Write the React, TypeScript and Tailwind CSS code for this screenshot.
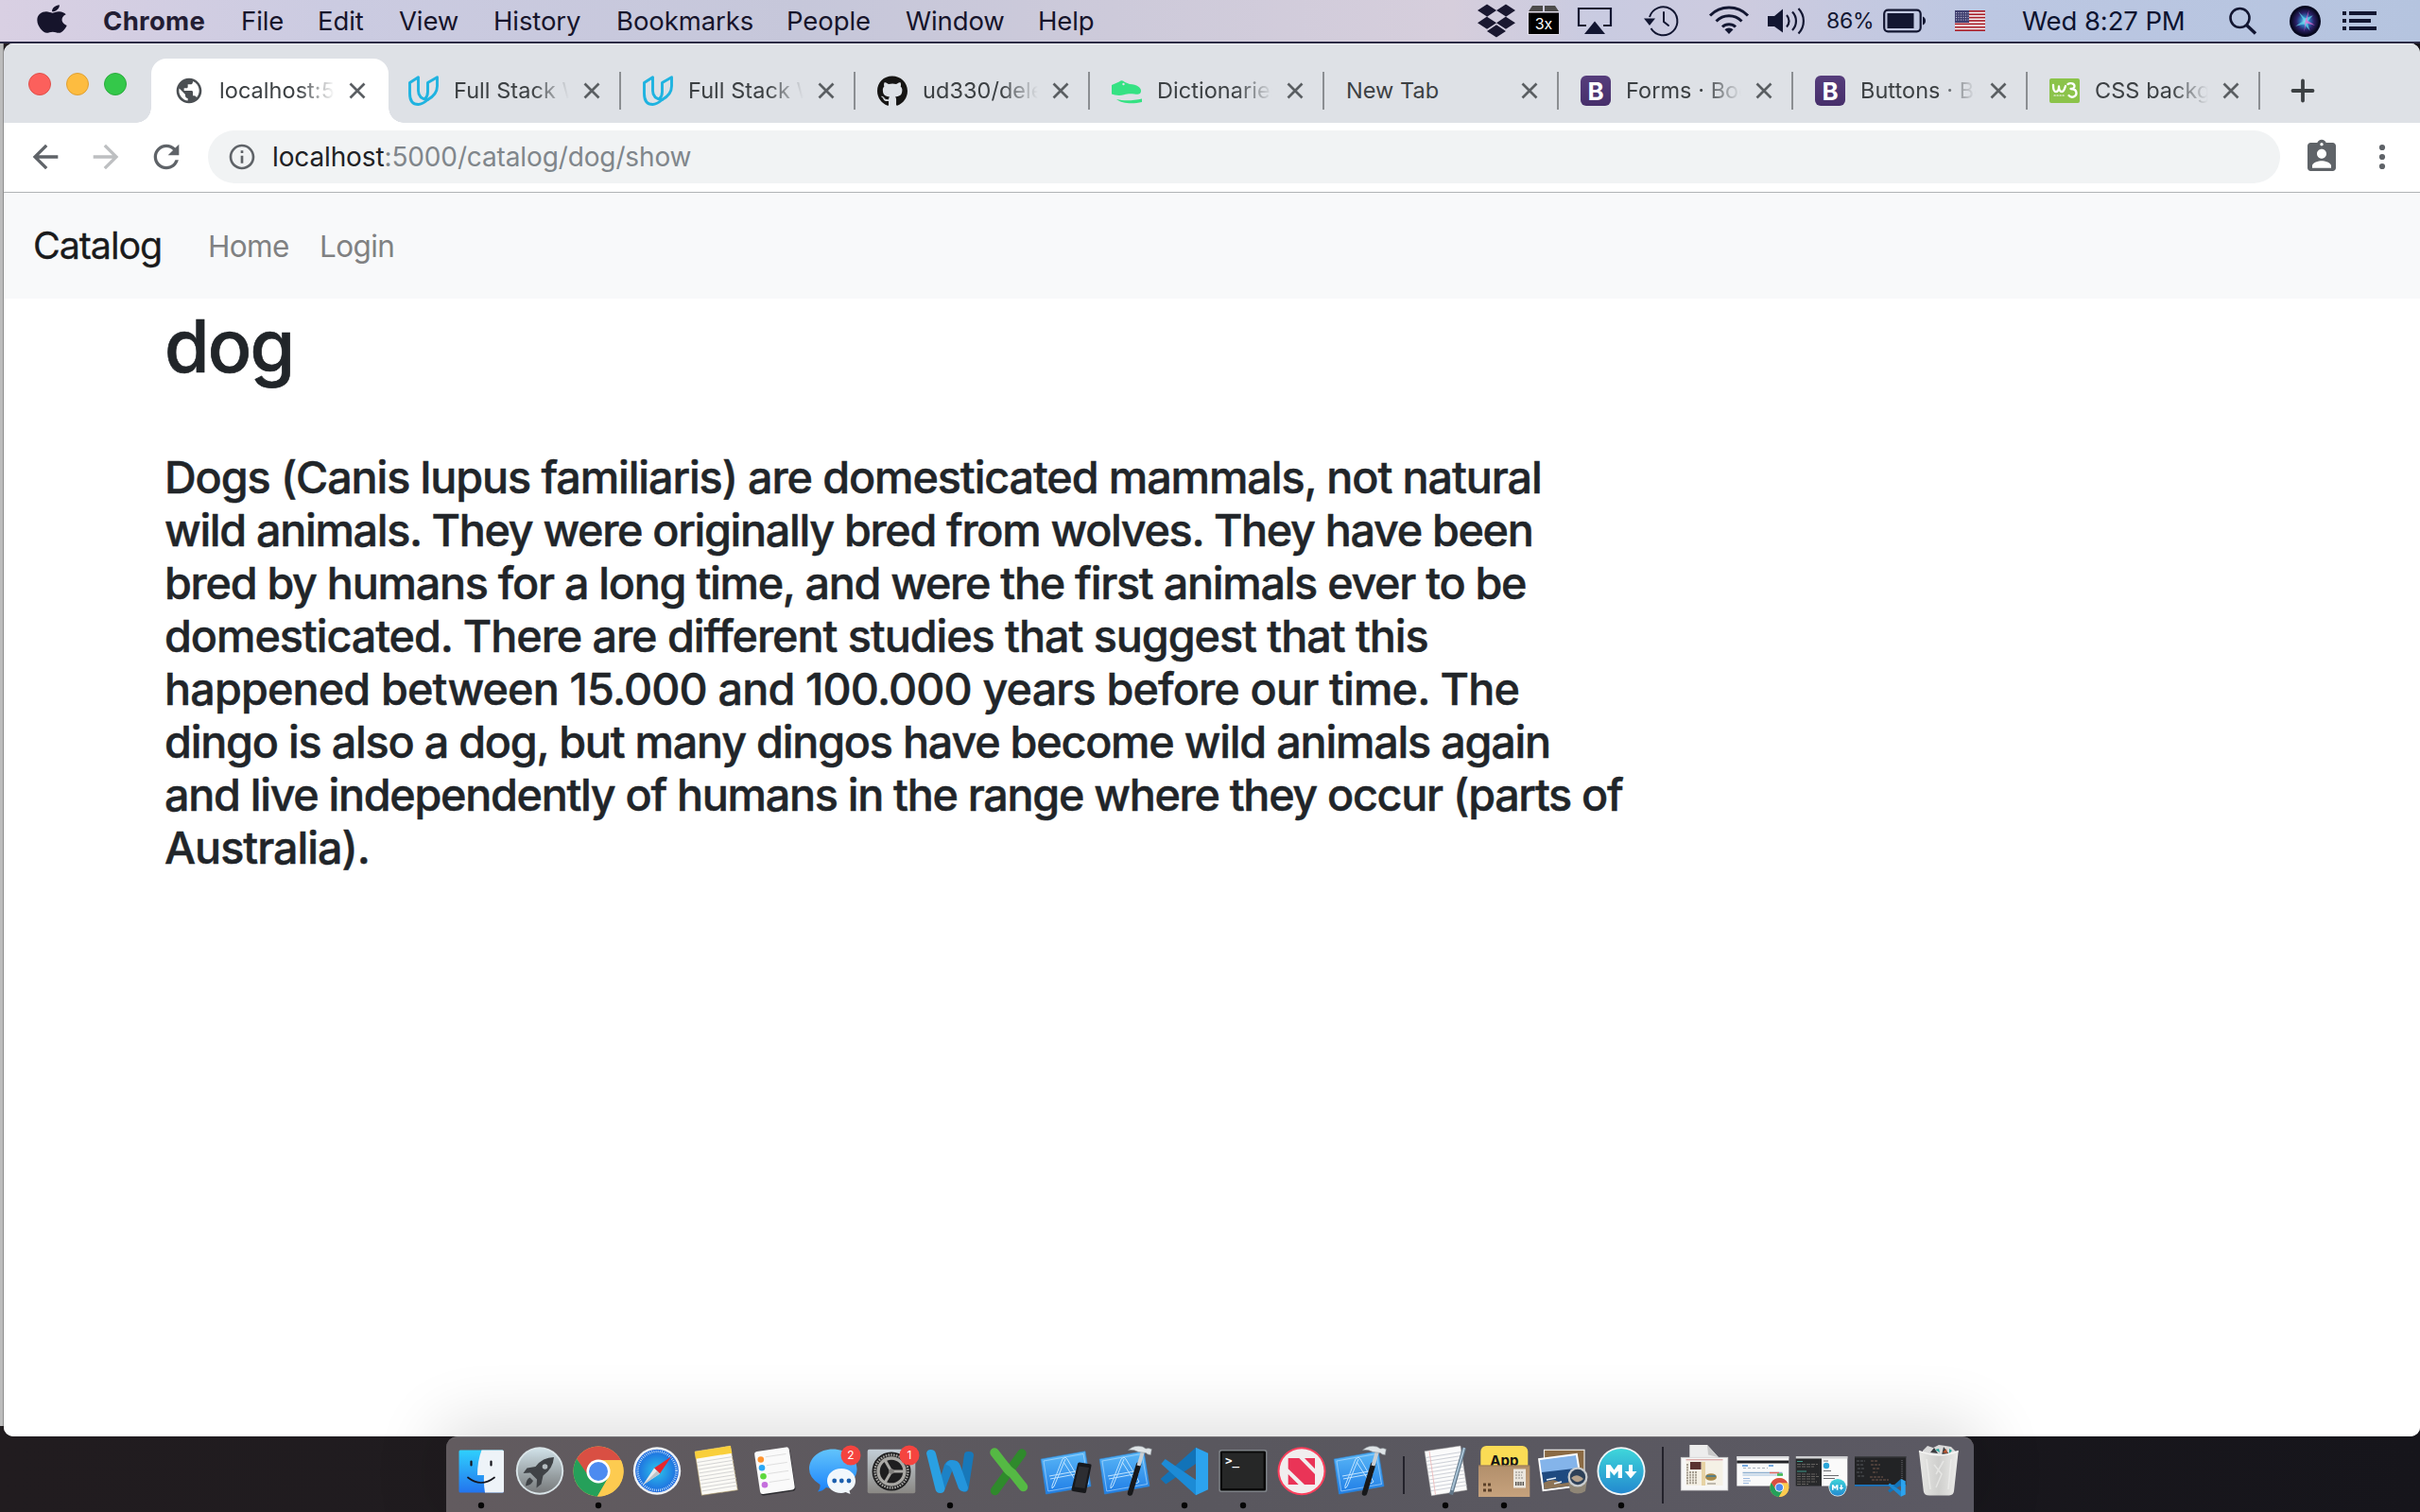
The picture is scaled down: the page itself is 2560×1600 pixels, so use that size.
import React from "react";
import { FaApple, FaDropbox, FaGithub } from "react-icons/fa";
import { MdPublic, MdArrowBack, MdArrowForward, MdRefresh, MdInfoOutline, MdAssignmentInd } from "react-icons/md";

/* ---------- Menu bar ---------- */

const menus = [
  { label: "File", cls: "w-[81px]" },
  { label: "Edit", cls: "w-[86px]" },
  { label: "View", cls: "w-[100px]" },
  { label: "History", cls: "w-[130px]" },
  { label: "Bookmarks", cls: "w-[180px]" },
  { label: "People", cls: "w-[126px]" },
  { label: "Window", cls: "w-[140px]" },
  { label: "Help", cls: "w-[100px]" },
];

function MenuBar() {
  return (
    <header className="flex h-11 items-center bg-[linear-gradient(90deg,#d9d0e3_0%,#cbcbe1_14%,#c6c7da_33%,#cdcada_46%,#d6cedc_60%,#c9cbe1_66%,#cdcbdf_72%,#bcc7e2_82%,#b5c4df_100%)] text-[27.5px] tracking-[-0.1px] text-[#16142b]">
      <FaApple className="ml-[39px] h-[34px] w-[32px] shrink-0 -translate-y-[2px]" preserveAspectRatio="none" />
      <div className="mt-[2px] ml-[38px] w-[146px] font-bold tracking-[0.3px] text-[#231d33]">Chrome</div>
      {menus.map((m) => (
        <div key={m.label} className={`${m.cls} mt-[2px] shrink-0`}>{m.label}</div>
      ))}
      <div className="ml-auto flex h-full shrink-0 items-center text-[#121631]">
        <FaDropbox className="h-[40px] w-[40px] text-[#1a1830]" preserveAspectRatio="none" />
        <svg className="ml-[13px] h-[44px] w-[34px]" viewBox="0 0 34 44">
          <path d="M5 6h11v6H1zM18 6h11l4 6H18z" fill="#4c4b4b" />
          <rect x="0" y="12" width="33" height="25" fill="#e8e4ee" opacity=".8" />
          <rect x="1" y="13.500" width="32" height="22.500" fill="#000" />
          <text x="17" y="30.500" fill="#fff" fontSize="16" textAnchor="middle" fontFamily="Inter, sans-serif">3x</text>
        </svg>
        <svg className="ml-[18px] h-[44px] w-[38px]" viewBox="0 0 38 44">
          <path d="M10 27H2V9h34v18h-8" fill="none" stroke="currentColor" strokeWidth="2.200" />
          <path d="M19 22.500 30 36H8z" fill="currentColor" />
        </svg>
        <svg className="ml-[32px] h-[44px] w-[40px]" viewBox="0 0 40 44" fill="none" stroke="currentColor" strokeWidth="2">
          <path d="M7 18A15 15 0 1 1 8.500 30" />
          <path d="M22 13v10l5 4" strokeLinecap="round" />
          <path d="M1 19.500h12L7 27z" fill="currentColor" stroke="none" />
        </svg>
        <svg className="ml-[29px] h-[44px] w-[44px]" viewBox="0 0 44 44" fill="none" stroke="currentColor" strokeWidth="3">
          <path d="M2 16.500a28 28 0 0 1 40 0M8.500 22.500a19 19 0 0 1 27 0M15 28.500a10 10 0 0 1 14 0" />
          <path d="M22 36l-4.500-4.700a6.500 6.500 0 0 1 9 0z" fill="currentColor" stroke="none" />
        </svg>
        <svg className="ml-[18px] h-[44px] w-[44px]" viewBox="0 0 44 44" fill="none" stroke="currentColor" strokeWidth="2.200">
          <path d="M1 17h7l9-7.500v25L8 28H1z" fill="currentColor" stroke="none" />
          <path d="M21 16a9 9 0 0 1 0 12.500M27 12.500a14 14 0 0 1 0 19.500M33.500 9a19 19 0 0 1 0 26.500" />
        </svg>
        <span className="mt-px ml-[19px] w-[60px] text-[23px] tracking-[-0.2px]">86%</span>
        <svg className="h-[44px] w-[46px]" viewBox="0 0 46 44">
          <rect x="1.200" y="10.700" width="38.500" height="22.600" rx="4" fill="none" stroke="currentColor" strokeWidth="2.200" />
          <rect x="4.500" y="14" width="28" height="16" fill="currentColor" />
          <path d="M42 17.500c4 1.500 4 7.500 0 9z" fill="currentColor" />
        </svg>
        <svg className="ml-[30px] h-[22px] w-[32px]" viewBox="0 0 32 22">
          <rect width="32" height="22" fill="#f4f2f4" />
          {[0, 1, 2, 3, 4, 5, 6].map((i) => (
            <rect key={i} y={i * 3.380} width="32" height="1.700" fill="#a9202b" />
          ))}
          <rect width="15" height="13" fill="#3f3f70" />
          <path d="M1 2.500h14M1 5h14M1 7.500h14M1 10h14" stroke="#c9c9dc" strokeWidth="1" strokeDasharray="1 1.500" />
        </svg>
        <span className="mt-[2px] ml-[39px] w-[173px] text-[#0c1330]">Wed 8:27 PM</span>
        <svg className="ml-[46px] h-[44px] w-[30px]" viewBox="0 0 30 44" fill="none" stroke="currentColor" strokeWidth="2.600">
          <circle cx="11.500" cy="19" r="10" />
          <path d="M18.500 26.500 28 35.500" strokeWidth="3.400" />
        </svg>
        <svg className="ml-[34px] h-[33px] w-[33px]" viewBox="0 0 32 32">
          <defs>
            <radialGradient id="siri">
              <stop offset="0" stopColor="#bff3fb" />
              <stop offset=".3" stopColor="#2f7fc4" />
              <stop offset=".65" stopColor="#2b2168" />
              <stop offset="1" stopColor="#0a0a24" />
            </radialGradient>
          </defs>
          <circle cx="16" cy="16" r="16" fill="#07081f" />
          <circle cx="16" cy="16" r="14" fill="url(#siri)" />
          <path d="M15 16 9 6l7 7 8-3-6 7 3 9-6-7-9 2 6-4z" fill="#63dcec" opacity=".7" />
          <path d="M16 16 20 4l-2 11 8 5-9-2-2 9z" fill="#ef6bd4" opacity=".75" />
        </svg>
        <svg className="mr-[45px] ml-[22px] h-[44px] w-[38px]" viewBox="0 0 38 44" fill="currentColor">
          <path d="M1 12h4v4H1zM8 12h29v4H8zM1 20h4v4H1zM8 20h23v4H8zM1 28h4v4H1zM8 28h29v4H8z" />
        </svg>
      </div>
    </header>
  );
}

/* ---------- Tabs ---------- */

function Udacity() {
  return (
    <svg className="h-8 w-8" viewBox="0 0 32 32" fill="none" stroke="#1fb3e0" strokeWidth="2.900" strokeLinejoin="round">
      <path d="M1.500 7.500 10.500 1.800V16Q10.500 24.500 20.500 25.500 14.500 30.500 10.500 30.500 1.500 30.500 1.500 19z" />
      <path d="M20.500 25.500Q30.500 20 30.500 11V1.800L20.500 7.500V17Q20.500 22 17.500 24.500" />
    </svg>
  );
}

function Dino() {
  return (
    <svg className="h-8 w-8" viewBox="0 0 32 32" fill="#35e283">
      <path d="M0 10 8 6.500Q11 4 14 7l5 2c8 0 12 4 12 7 0 4-3 4-7 3.500-4-.5-7-.5-11 .8C9 21.500 3 21 0 19.500z" />
      <circle cx="12.500" cy="9" r="1.200" fill="#dee1e6" />
      <path d="M5 25c8 2 18 1.500 27-.5v3.500c-9 2-21 2-27-3z" />
    </svg>
  );
}

function Bootstrap() {
  return (
    <div className="flex h-8 w-8 items-center justify-center rounded-md bg-linear-to-b from-[#563d7c] to-[#472f6b] text-[26px] font-bold text-white">B</div>
  );
}

function W3() {
  return (
    <div className="flex h-[26px] w-8 flex-col items-center justify-center rounded-[2px] bg-[#8bc34a] text-white">
      <svg className="h-[26px] w-8" viewBox="0 0 32 26" fill="none" stroke="#fff" strokeWidth="2.300" strokeLinecap="round" strokeLinejoin="round">
        <path d="M4 7c0 6 1 7 3 7s3-2 3-5.500c0 3.500 1 5.500 3.200 5.500S16 11 17 8M19.500 6c3-2 7-.5 7 2s-2.500 3-4 3c3 0 6 1 6 4.500s-5 6-8 2.500" />
        <path d="M5 18h11" strokeWidth="1.200" strokeDasharray="1.200 1.800" />
      </svg>
    </div>
  );
}

type TabInfo = { title: string; icon?: React.ReactNode; active?: boolean };

const tabs: TabInfo[] = [
  { title: "localhost:5000", icon: <MdPublic className="h-[34px] w-[34px] text-[#4b4f53]" />, active: true },
  { title: "Full Stack Web", icon: <Udacity /> },
  { title: "Full Stack Web", icon: <Udacity /> },
  { title: "ud330/delete", icon: <FaGithub className="h-[33px] w-[33px] text-[#161514]" /> },
  { title: "Dictionaries", icon: <Dino /> },
  { title: "New Tab" },
  { title: "Forms · Bootstrap", icon: <Bootstrap /> },
  { title: "Buttons · Bootstrap", icon: <Bootstrap /> },
  { title: "CSS background", icon: <W3 /> },
];

function Tab({ tab, last }: { tab: TabInfo; last: boolean }) {
  return (
    <div className={`relative flex h-[68px] shrink-0 items-center ${last ? "w-[246px]" : "w-[248px]"}`}>
      {tab.active && (
        <>
          <span className="absolute inset-y-0 -right-[2px] -left-px rounded-t-[16px] bg-white" />
          <span className="absolute bottom-0 -left-[17px] h-4 w-4 bg-[radial-gradient(circle_at_0_0,transparent_15.500px,#fff_16px)]" />
          <span className="absolute -right-[18px] bottom-0 h-4 w-4 bg-[radial-gradient(circle_at_100%_0,transparent_15.500px,#fff_16px)]" />
        </>
      )}
      {tab.icon && <span className="relative ml-[23px] flex w-[32px] shrink-0 justify-center">{tab.icon}</span>}
      <span className={`relative overflow-hidden text-[23.5px] tracking-[0.05px] whitespace-nowrap text-[#3c4043] ${tab.icon ? `ml-[16px] [mask-image:linear-gradient(to_right,#000_68%,transparent_100%)] ${last ? "w-[120px]" : "w-[122px]"}` : "ml-[23px] w-[170px]"}`}>{tab.title}</span>
      <svg className="relative ml-[15px] h-[18px] w-[18px] shrink-0" viewBox="0 0 18 18" stroke="#5a5e62" strokeWidth="2.700">
        <path d="M1.500 1.500l15 15M16.500 1.500l-15 15" />
      </svg>
      {!tab.active && <span className="ml-auto h-10 w-[2px] shrink-0 bg-[#8b8e92]" />}
    </div>
  );
}

function TabStrip() {
  return (
    <div className="flex h-[84px] items-end border-t border-[#f2f3f5] bg-[#dee1e6]">
      <div className="flex h-[68px] w-[157px] items-center gap-[16px] pb-[14px] pl-[26px]">
        <span className="h-6 w-6 rounded-full border border-[#e0504b] bg-[#fc605c]" />
        <span className="h-6 w-6 rounded-full border border-[#dfa033] bg-[#fdbc40]" />
        <span className="h-6 w-6 rounded-full border border-[#2bac3e] bg-[#34c84a]" />
      </div>
      {tabs.map((t, i) => (
        <Tab key={i} tab={t} last={i === tabs.length - 1} />
      ))}
      <svg className="mb-[21px] ml-[32px] h-[26px] w-[26px]" viewBox="0 0 26 26" stroke="#3c4043" strokeWidth="3.800" strokeLinecap="round">
        <path d="M13 2.500v21M2.500 13h21" />
      </svg>
    </div>
  );
}

function Toolbar() {
  return (
    <div className="flex h-[74px] items-center border-b border-[#b0b3b5] bg-white pb-px text-[#5f6368]">
      <MdArrowBack className="ml-[24px] h-10 w-10" />
      <MdArrowForward className="ml-[24px] h-10 w-10 text-[#bdbfc1]" />
      <MdRefresh className="ml-[24px] h-10 w-10" />
      <div className="ml-[24px] flex h-14 w-[2192px] items-center rounded-full bg-[#f1f3f4]">
        <MdInfoOutline className="ml-[20px] h-8 w-8" />
        <span className="ml-[16px] text-[28px] tracking-[-0.130px] text-[#80868b]">
          <span className="text-[#202124]">localhost</span>:5000/catalog/dog/show
        </span>
      </div>
      <MdAssignmentInd className="ml-[24px] h-10 w-10" />
      <svg className="ml-[34px] h-10 w-[20px]" viewBox="0 0 20 40" fill="#5f6368">
        <circle cx="10" cy="10" r="3.100" />
        <circle cx="10" cy="20" r="3.100" />
        <circle cx="10" cy="30" r="3.100" />
      </svg>
    </div>
  );
}

/* ---------- Page ---------- */

const lines = [
  { text: "Dogs (Canis lupus familiaris) are domesticated mammals, not natural", cls: "tracking-[-1.100px]" },
  { text: "wild animals. They were originally bred from wolves. They have been", cls: "tracking-[-1.310px]" },
  { text: "bred by humans for a long time, and were the first animals ever to be", cls: "tracking-[-1.270px]" },
  { text: "domesticated. There are different studies that suggest that this", cls: "tracking-[-1.050px]" },
  { text: "happened between 15.000 and 100.000 years before our time. The", cls: "tracking-[-0.840px]" },
  { text: "dingo is also a dog, but many dingos have become wild animals again", cls: "tracking-[-1.220px]" },
  { text: "and live independently of humans in the range where they occur (parts of", cls: "tracking-[-1.300px]" },
  { text: "Australia).", cls: "tracking-[-1.000px]" },
];

function Page() {
  return (
    <div className="flex-1 bg-white">
      <nav className="flex h-28 items-center bg-[#f8f9fa] pt-[2px]">
        <span className="ml-[31px] w-[185px] text-[39.500px] tracking-[-1.100px] text-[#1a1b1c] [-webkit-text-stroke:0.3px_#1a1b1c]">Catalog</span>
        <span className="w-[118px] text-[31.500px] tracking-[-0.600px] text-[#808182]">Home</span>
        <span className="text-[31.500px] tracking-[-0.600px] text-[#808182]">Login</span>
      </nav>
      <main className="pt-1 pl-[170px] text-[#212529]">
        <h1 className="h-[92px] text-[77px] leading-[92px] font-medium tracking-[-1.800px] [-webkit-text-stroke:0.7px_#212529]">dog</h1>
        <h3 className="mt-[65px] text-[46.700px] leading-[56px] font-medium whitespace-nowrap [-webkit-text-stroke:0.5px_#212529]">
          {lines.map((l) => (
            <span key={l.text} className={`block ${l.cls}`}>{l.text}</span>
          ))}
        </h3>
      </main>
    </div>
  );
}

/* ---------- Dock ---------- */

function Cell({ children, running }: { children: React.ReactNode; running?: boolean }) {
  return (
    <svg className="h-20 w-[62px] shrink-0" viewBox="0 0 62 80">
      {children}
      {running && <circle cx="31" cy="73" r="3.200" fill="#050505" />}
    </svg>
  );
}

function ChromeLogo({ x, y, r }: { x: number; y: number; r: number }) {
  return (
    <g transform={`translate(${x} ${y}) scale(${r / 26})`}>
      <circle r="26" fill="#fdcb50" />
      <path d="M-22.500-13A26 26 0 0 1 22.500-13L23.500-11.500H0L-11 6z" fill="#d94f43" />
      <path d="M-22.500-13A26 26 0 0 0-1 26L10.500 6.500-9 6.500z" fill="#25a05a" />
      <path d="M23.500-11.500H0V0L10.500 6-1 26A26 26 0 0 0 23.500-11.500z" fill="#fdcb50" />
      <circle r="12.300" fill="#fff" />
      <circle r="9.800" fill="#4d8bf0" />
    </g>
  );
}

function CodeLogo() {
  return (
    <>
      <path d="M43 11.700V29L11.300 50.500 5.700 45z" fill="#1273b8" />
      <path d="M10.700 24 6.300 29 43 62.300V46z" fill="#1c8bd6" />
      <path d="M43 11.700 56 17.700V56.300L43 62.300z" fill="#2ca3ee" />
    </>
  );
}

function MdLogo() {
  return (
    <>
      <circle cx="31" cy="36.700" r="25.500" fill="#f1f6f7" />
      <circle cx="31" cy="36.700" r="23.700" fill="url(#mdg)" />
      <path d="M15 44V30h4.500l4 5.500 4-5.500H32v14h-4.300v-7.500L23.500 41.500l-4.200-5V44zM39 30h4v7h4.500L41 44.500 34.700 37H39z" fill="#fff" />
    </>
  );
}

function Blueprint() {
  return (
    <>
      <path d="M3.200 24 50 15.700 56 52.700 8.500 61z" fill="url(#bpg)" stroke="#2a86d8" strokeWidth=".6" />
      <g fill="none" stroke="#bfe3ff" strokeWidth="1">
        <path d="M6 26 48 18.500 53.500 50.500 10.800 58z" opacity=".6" />
        <path d="M26 24 15 52M29 24 17 53M26 24l3-2 2 2M15 52l0 3 2-2M27 27l15 23M31 24l14 24M42 50l3-2M12 42l33-6M13 45l32-6" />
      </g>
    </>
  );
}

function XcodeIcon() {
  return (
    <Cell>
      <Blueprint />
      <path d="M44.500 30 35.500 60" stroke="#17181a" strokeWidth="5.500" strokeLinecap="round" />
      <path d="M49.500 14 44.500 31" stroke="#c8ced3" strokeWidth="4" />
      <path d="M33.500 14.500Q40 8.500 49 11l3 2 3-.5 3.300 1-1 6-3-.5-2-1.500-8-1q-5-3-10.800-2z" fill="#dfe4e7" stroke="#8a9096" strokeWidth=".6" />
    </Cell>
  );
}

function Badge({ n }: { n: string }) {
  return (
    <>
      <circle cx="50" cy="20" r="10.500" fill="#f5443f" />
      <text x="50" y="24.300" fill="#fff" fontSize="12" textAnchor="middle" fontFamily="Inter, sans-serif">{n}</text>
    </>
  );
}

function Divider({ cls, bar }: { cls: string; bar: string }) {
  return (
    <div className={`flex h-20 shrink-0 items-center justify-center ${cls}`}>
      <span className={`w-[2px] bg-[#23222b] ${bar}`} />
    </div>
  );
}

function Dock() {
  return (
    <footer className="relative z-10 flex h-20 justify-center">
      <div className="flex w-[1616px] rounded-t-[12px] border-t border-[#737074] bg-linear-to-r from-[#625b5f] via-[#59575e] to-[#5b5963] px-[6px] shadow-[0_-4px_70px_8px_rgba(0,0,0,0.140)]">
        <div className="-mt-px flex">
          <svg className="absolute h-0 w-0">
            <defs>
              <linearGradient id="mdg" x2="0" y2="1"><stop stopColor="#3fd6da" /><stop offset="1" stopColor="#2389cf" /></linearGradient>
              <linearGradient id="bpg" x2="0" y2="1"><stop stopColor="#5bb8f7" /><stop offset="1" stopColor="#1f7de6" /></linearGradient>
              <linearGradient id="fng" x2="0" y2="1"><stop stopColor="#2fd0fd" /><stop offset="1" stopColor="#2374ee" /></linearGradient>
              <linearGradient id="lpg" x2="0" y2="1"><stop stopColor="#cfe0e7" /><stop offset=".6" stopColor="#98a0a3" /><stop offset="1" stopColor="#77797b" /></linearGradient>
              <radialGradient id="sfg"><stop stopColor="#2cc4ea" /><stop offset="1" stopColor="#1d68df" /></radialGradient>
              <linearGradient id="msg" x2="0" y2="1"><stop stopColor="#62c4fb" /><stop offset="1" stopColor="#1c83fb" /></linearGradient>
              <linearGradient id="prg" x2="0" y2="1"><stop stopColor="#c4cfd7" /><stop offset="1" stopColor="#8a8884" /></linearGradient>
              <linearGradient id="bxg" x2="0" y2="1"><stop stopColor="#b28f6b" /><stop offset="1" stopColor="#c6a27d" /></linearGradient>
              <linearGradient id="trg"><stop stopColor="#e8e8e6" /><stop offset=".5" stopColor="#cfcfcd" /><stop offset="1" stopColor="#ececea" /></linearGradient>
            </defs>
          </svg>
          <Cell running>
            <rect x="7.500" y="14.500" width="47.500" height="45" rx="1.500" fill="url(#fng)" />
            <path d="M31.500 14.500H53.500a1.500 1.500 0 0 1 1.500 1.500V58a1.500 1.500 0 0 1-1.500 1.500H35q-1.500-9-1-18.500H27q0-15 4.500-26.500z" fill="#eef3f8" />
            <path d="M20.500 26.500v4M41.500 26.500v4" stroke="#15151d" strokeWidth="2.200" strokeLinecap="round" />
            <path d="M17 43.500q14 11 28 0" fill="none" stroke="#15151d" strokeWidth="1.700" strokeLinecap="round" />
          </Cell>
          <Cell>
            <circle cx="31" cy="36.500" r="25.200" fill="#d9e4e8" />
            <circle cx="31" cy="36.500" r="23.300" fill="url(#lpg)" />
            <path d="M46 22q-12 0-19.500 10l-9 1.500-4 5.500 7.500-.5 7 7-.500 9 5-4 2-9Q45 34 46 22z" fill="#3f4246" />
            <path d="M20.500 43.500q-4 2-4.500 9 6-1 8-5.500z" fill="#3f4246" />
            <circle cx="36.500" cy="32" r="2.800" fill="#b4bcc0" />
          </Cell>
          <Cell running><ChromeLogo x={31} y={37} r={26.500} /></Cell>
          <Cell>
            <circle cx="31" cy="36.500" r="25.200" fill="#eef1f3" />
            <circle cx="31" cy="36.500" r="22.800" fill="url(#sfg)" />
            <circle cx="31" cy="36.500" r="20.500" fill="none" stroke="#cfe9fb" strokeWidth="2.600" strokeDasharray=".8 1.350" />
            <path d="M46 21.500 28 33.500 34 39.500z" fill="#e8262d" />
            <path d="M16 51.500 28 33.500 34 39.500z" fill="#e9eaec" />
            <path d="M16 51.500 31 36.500 34 39.500z" fill="#bfc3c8" />
          </Cell>
          <Cell>
            <path d="M9 16 46.700 10 54.300 56.700 16.300 62.300z" fill="#fbfaf6" stroke="#b3a06b" strokeWidth=".6" />
            <path d="M9 16 46.700 10 48.300 17.700 10 23.700z" fill="#f9cf3a" />
            {[0, 1, 2, 3, 4, 5, 6, 7, 8].map((i) => (
              <path key={i} d={`M${11.500 + i * 0.620} ${27.500 + i * 3.800}l37.500-6`} stroke="#cfcfcf" strokeWidth=".9" />
            ))}
          </Cell>
          <Cell>
            <g transform="rotate(-8.500 31.300 36.500)">
              <rect x="13.500" y="15" width="37" height="45.500" rx="3" fill="#2c2c30" />
              <rect x="13" y="13.500" width="37" height="45.500" rx="3" fill="#fafafa" />
              <path d="M24 20.500h22M24 29.500h22M24 38.500h22M24 47.500h22" stroke="#d9d9d9" strokeWidth=".8" />
            </g>
            <circle cx="16.800" cy="24.500" r="3.300" fill="#ff9430" />
            <circle cx="18" cy="33.300" r="3.300" fill="#2ba8f5" />
            <circle cx="19.500" cy="42.300" r="3.300" fill="#5dd83c" />
            <circle cx="21" cy="51.300" r="3.300" fill="#c56fdd" />
          </Cell>
          <Cell>
            <path d="M31 13.500c14 0 25.500 9 25.500 21S45 55 31 55q-4 0-7-1-4 4-9 4.500 3-3.500 2.500-7.500Q6 44 6 34.500c0-12 11-21 25-21z" fill="url(#msg)" />
            <path d="M40 34c9 0 15 6 15 13 0 5-3 8.500-6.500 10.500L49.500 61l-5-2Q42 60 40 60c-9 0-15-6-15-13s6-13 15-13z" fill="#f1f7fc" />
            <g fill="#1b5fae"><circle cx="32.700" cy="47" r="2.400" /><circle cx="40.300" cy="47" r="2.400" /><circle cx="48" cy="47" r="2.400" /></g>
            <Badge n="2" />
          </Cell>
          <Cell>
            <rect x="5.700" y="13.700" width="50.600" height="46.500" rx="2" fill="url(#prg)" />
            <circle cx="31" cy="37" r="20.500" fill="#1e1e1f" />
            <circle cx="31" cy="37" r="17.500" fill="none" stroke="#a3a29f" strokeWidth="2.500" strokeDasharray="1.600 1.200" />
            <circle cx="31" cy="37" r="14" fill="none" stroke="#a9a8a4" strokeWidth="3.400" />
            <path d="M31 37 23.500 24M31 37H46M31 37 23.500 50" stroke="#a9a8a4" strokeWidth="3" />
            <circle cx="31" cy="37" r="2.800" fill="#807f7c" />
            <Badge n="1" />
          </Cell>
          <Cell running>
            <path d="M46 19Q46.500 15.500 51 16 56 16 56 20L50.500 56Q49 60 45 58L41.500 50z" fill="#1878b9" />
            <path d="M17 57 25 30Q28 25 32.500 25L33 37 25.500 56Q23 61 17 57z" fill="#1c82c6" />
            <path d="M26.500 30Q28 25 33.500 25 40 25 42 31L50 54Q50 58.500 45.500 58.500 42 58.500 40 55L33 36Q31 30 26.500 30z" fill="#2495dc" />
            <path d="M6 18Q6.500 14 10.500 14 15 14 16 18L25.500 55Q25.500 60 20.500 60 16.500 60 15.500 56z" fill="#2aa0e2" />
          </Cell>
          <Cell>
            <g fill="none" strokeLinecap="round" strokeWidth="9.500">
              <path d="M45 18 16.500 57.500" stroke="#2f8a2c" />
              <path d="M16 17 27 31Q31 37 35 39L46.500 53.500" stroke="#55b944" />
            </g>
          </Cell>
          <Cell>
            <Blueprint />
            <path d="M44 27.500 55 29.200Q57 29.500 56.500 31L51 58.500Q50.600 60.300 49 60L37 58Q35 57.500 35.500 56L42 29Q42.500 27.300 44 27.500z" fill="#17181b" />
            <path d="M43.500 31.500 54 33 49.500 55 38.500 53.500z" fill="#2c2d31" />
          </Cell>
          <XcodeIcon />
          <Cell running><CodeLogo /></Cell>
          <Cell running>
            <rect x="5.300" y="14" width="51.200" height="45" rx="2.500" fill="#7e8287" />
            <rect x="6.800" y="15.500" width="48.200" height="42" rx="1.500" fill="#0a0a0a" />
            <rect x="9" y="17.500" width="43.500" height="37.500" fill="#262727" />
            <text x="12" y="29.500" fill="#fff" fontSize="12.500" fontWeight="700" fontFamily="DejaVu Sans Mono, monospace">&gt;_</text>
          </Cell>
          <Cell>
            <circle cx="31" cy="36.700" r="25.500" fill="#fb3f5c" />
            <circle cx="31" cy="36.700" r="23.500" fill="#f1eeee" />
            <path d="M16.700 23H28.300L45 40V51H34L16.700 34.300zM34 23H45V34.300zM16.700 40 27.700 51H16.700z" fill="#ea3457" />
          </Cell>
          <XcodeIcon />
        </div>
        <Divider cls="w-[30px]" bar="h-10" />
        <div className="-mt-px -ml-[2px] flex">
          <Cell running>
            <path d="M9 15.700 47 10 54 56.700 16.300 62.700z" fill="#fbfbfb" stroke="#a9a9a9" strokeWidth=".5" />
            {[0, 1, 2, 3, 4, 5, 6, 7, 8, 9].map((i) => (
              <path key={i} d={`M${10.500 + i * 0.600} ${22.500 + i * 3.900}l37.500-6`} stroke="#c7cbd2" strokeWidth=".9" />
            ))}
            <path d="M14 15.500 20.500 61.500" stroke="#efb5b5" strokeWidth=".8" />
            <path d="M51 12 37 61.500" stroke="#62788a" strokeWidth="4.200" />
            <path d="M51 12 38 57" stroke="#a9c3d6" strokeWidth="2" />
          </Cell>
          <Cell running>
            <rect x="6.300" y="10" width="50" height="30" rx="6" fill="#fbdc55" />
            <text x="31.300" y="31" fill="#151515" fontSize="15" fontWeight="700" textAnchor="middle" fontFamily="Inter, sans-serif">App</text>
            <rect x="4" y="30.700" width="54.300" height="33.300" fill="url(#bxg)" />
            <path d="M4 31h54" stroke="#9a7854" strokeWidth="1" />
            <rect x="41" y="34.500" width="13" height="20" fill="#ebe6de" />
            <path d="M43 38h9M43 41h7M43 44h8" stroke="#8e8a84" strokeWidth="1.200" strokeDasharray="2 1" />
            <path d="M43 50h9" stroke="#55524d" strokeWidth="4" strokeDasharray="1 .6" />
            <path d="M9 51h3M14 51h3M9 57h3M14 57h4" stroke="#5a4029" strokeWidth="3" />
          </Cell>
          <Cell>
            <rect x="11.500" y="14.300" width="42.500" height="30" fill="#8b6a43" stroke="#efece6" strokeWidth="1.200" />
            <path d="M5 23.300 46.700 17.700 52.300 52.700 9.700 58.300z" fill="#fff" />
            <path d="M7 25 45 20 47.500 35 9 40z" fill="#84b4ea" />
            <path d="M9 38 47.500 33.500 50 51 11.500 56z" fill="#1f4a80" />
            <path d="M11 49q12-6 18 1l20-3 .7 4-38.200 5z" fill="#8d7456" />
            <path d="M14 46l10-2M22 50l8-2" stroke="#e6eef5" strokeWidth="1.600" />
            <path d="M37 46 39 58q8 5 16 0l2-12z" fill="#8f8676" />
            <circle cx="47" cy="43" r="10.500" fill="#c9ccce" />
            <circle cx="47" cy="43" r="8.200" fill="#2d4058" />
            <path d="M40 44q6-6 13 1-6 7-13-1z" fill="#b3a08b" />
          </Cell>
          <Cell running><MdLogo /></Cell>
        </div>
        <Divider cls="w-[26px]" bar="h-[60px]" />
        <div className="-mt-px flex">
          <Cell>
            <path d="M15.300 9H34L45.500 21.500V26H15.300z" fill="#ededed" />
            <path d="M34 9 35 19.500 45.500 22z" fill="#c9c9c9" />
            <rect x="6.300" y="22.300" width="49.500" height="34.700" fill="#f7f7f7" stroke="#d2d2d2" strokeWidth=".8" />
            <rect x="11.500" y="26" width="39" height="26" fill="#f5f1e6" />
            <path d="M11.500 24.800h39" stroke="#cf8a86" strokeWidth="1" />
            <rect x="16" y="27" width="11.500" height="8" fill="#5b3230" />
            <path d="M13 29v22M16 37v14M19 37v14M22 37v14" stroke="#8a8376" strokeWidth="1.500" strokeDasharray="2 .8" />
            <rect x="28" y="27" width="4" height="25" fill="#e7d3a4" />
            <ellipse cx="38" cy="43" rx="6" ry="3.800" fill="#a88a4a" />
            <path d="M33 42h10" stroke="#3c7d9d" strokeWidth="1.500" />
            <path d="M34 50h9" stroke="#8a8376" strokeWidth="1" />
          </Cell>
          <Cell>
            <rect x="3.300" y="21" width="55" height="31.500" fill="#fafafa" />
            <path d="M3.300 22.200h55" stroke="#d6d7da" strokeWidth="2" />
            <path d="M3.300 27h55" stroke="#222327" strokeWidth="2.800" />
            <path d="M9 31h6M37 31h5" stroke="#4a8fd8" strokeWidth="1.500" />
            <path d="M10 33.500h26" stroke="#aab3bd" strokeWidth="1" strokeDasharray="3 2" />
            <path d="M9.500 38.500h42" stroke="#8eb0cf" strokeWidth="1.400" />
            <path d="M38 38.500h10" stroke="#e0655c" strokeWidth="1.400" />
            <path d="M9.500 41h42" stroke="#bdd2e6" strokeWidth="1.500" />
            <path d="M46 40.500h6" stroke="#3fba51" strokeWidth="2.500" />
            <path d="M10 44.500h7M10 47h8M10 49.500h6" stroke="#9dbbe0" strokeWidth="1" />
            <ChromeLogo x={48.300} y={54} r={10} />
          </Cell>
          <Cell>
            <rect x="3.700" y="21" width="27.500" height="31.500" fill="#27282a" />
            <rect x="31" y="21" width="27.300" height="31.500" fill="#fafafa" />
            <path d="M3.700 22.300h54.600" stroke="#cfd0d2" strokeWidth="2.600" />
            <path d="M5 26.500h6M5 37h10" stroke="#3f9a8a" strokeWidth="1" />
            <path d="M5 29.500h22M5 32h18M5 40h21M5 42.500h23M5 45h19M5 48h21M5 50.500h12" stroke="#6d6a66" strokeWidth=".9" strokeDasharray="4 1" />
            <circle cx="36" cy="31" r="3.200" fill="#2aa5d8" />
            <path d="M33 26h5M33 36.500h8M33 41.500h16M33 44.500h12" stroke="#6a6c70" strokeWidth="1.200" />
            <g transform="translate(36.300 40) scale(.378)"><MdLogo /></g>
          </Cell>
          <Cell>
            <rect x="4" y="21" width="54.300" height="31.500" fill="#222325" />
            <path d="M4 21.800h54.300" stroke="#3b3c40" strokeWidth="1.500" />
            <path d="M4 51.800h54.300" stroke="#1b78c4" strokeWidth="1.800" />
            <path d="M6 26h9M6 30h7M7 34h8M6 38h6M7 42h7" stroke="#5b5d62" strokeWidth=".9" strokeDasharray="3 1" />
            <path d="M21 26h8M21 30h10M23 34h8M23 38h5M20 43h14M22 46h18" stroke="#7d5d50" strokeWidth=".9" strokeDasharray="3 1" />
            <path d="M54 25v22" stroke="#55565a" strokeWidth="1.500" strokeDasharray="1 1" />
            <g transform="translate(37 40.700) scale(.37)"><CodeLogo /></g>
          </Cell>
          <Cell>
            <path d="M14 15 19 10l6 2 6-3 7 1 6 1 5 5-2 5H14z" fill="#dadada" />
            <path d="M22 17l4-5 4 6zM36 11l6 8-8 1z" fill="#3b3d41" />
            <path d="M27 14l4-1 1 4zM42 13l3 2-3 3z" fill="#2aa59c" />
            <path d="M35 17l4-4 1 5z" fill="#b8562f" />
            <path d="M10 15.500Q31 24 51.700 15.500L47 58Q46.500 62 42 62.500H21Q15.500 62.500 14.800 58z" fill="url(#trg)" />
            <path d="M10 15.500Q31 24 51.700 15.500" fill="none" stroke="#f6f6f4" strokeWidth="1.600" />
            <path d="M18 24l4 32M44 24l-3 32M26 30l8 10-6 14M36 26l-8 14" stroke="#f2f2f0" strokeWidth="1.600" fill="none" opacity=".6" />
          </Cell>
        </div>
      </div>
    </footer>
  );
}

export default function App() {
  return (
    <div className="flex h-[1600px] w-[2560px] flex-col overflow-hidden bg-[linear-gradient(90deg,#211c1f_0%,#1e1b1f_40%,#16151b_100%)] font-['Inter',sans-serif]">
      <MenuBar />
      <div className="h-[2px] shrink-0 bg-[#2b2a45]" />
      <div className="flex min-h-0 flex-1">
        <div className="mb-[11px] w-1 shrink-0 border-r border-[#8d8d8d] bg-[#bcbcbc]" />
        <div className="flex min-w-0 flex-1 flex-col overflow-hidden rounded-[10px] bg-white">
          <TabStrip />
          <Toolbar />
          <Page />
        </div>
      </div>
      <Dock />
    </div>
  );
}
